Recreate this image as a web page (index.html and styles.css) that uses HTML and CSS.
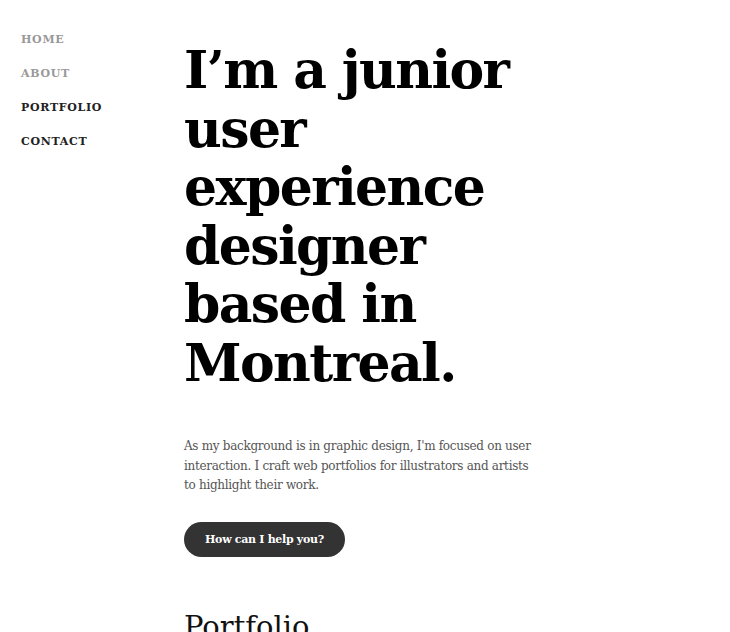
FILE: index.html
```html
<!DOCTYPE html>
<html>
<head>
<meta charset="utf-8">
<link rel="stylesheet" href="styles.css">
</head>
<body>
<div class="page">
  <nav class="nav">
    <a class="nav-link muted" href="#">HOME</a>
    <a class="nav-link muted" href="#">ABOUT</a>
    <a class="nav-link" href="#">PORTFOLIO</a>
    <a class="nav-link" href="#">CONTACT</a>
  </nav>
  <main class="main">
    <h1 class="hero">I’m a junior user experience designer based in Montreal.</h1>
    <p class="intro">As my background is in graphic design, I'm focused on user interaction. I craft web portfolios for illustrators and artists to highlight their work.</p>
    <a class="btn" href="#">How can I help you?</a>
    <h2 class="section-title">Portfolio</h2>
  </main>
</div>
</body>
</html>
```
FILE: styles.css
```css
html, body { margin: 0; padding: 0; background: #fff; }
body { font-family: "DejaVu Serif", "Liberation Serif", serif; color: #111; overflow: hidden; height: 632px; }
.page { display: flex; }
.nav { width: 184px; flex: none; display: flex; flex-direction: column; gap: 18px; padding: 32px 0 0 21px; box-sizing: border-box; }
.nav-link { font-size: 11px; font-weight: bold; letter-spacing: 0.7px; color: #222; text-decoration: none; line-height: 16px; }
.nav-link.muted { color: #999; }
.main { width: 360px; }
.hero { font-size: 52px; line-height: 58.5px; font-weight: bold; margin: 41px 0 0 0; letter-spacing: -1.6px; color: #000; }
.intro { font-size: 12px; letter-spacing: -0.3px; line-height: 19.5px; color: #555; margin: 45px 0 0 0; width: 352px; }
.btn { display: inline-block; margin-top: 26px; background: #333; color: #fff; text-decoration: none; font-weight: bold; font-size: 11px; letter-spacing: -0.3px; height: 35px; line-height: 35px; padding: 0 21px; border-radius: 18px; }
.section-title { font-weight: normal; font-size: 29px; margin: 52px 0 0 0; line-height: 36px; }
```
